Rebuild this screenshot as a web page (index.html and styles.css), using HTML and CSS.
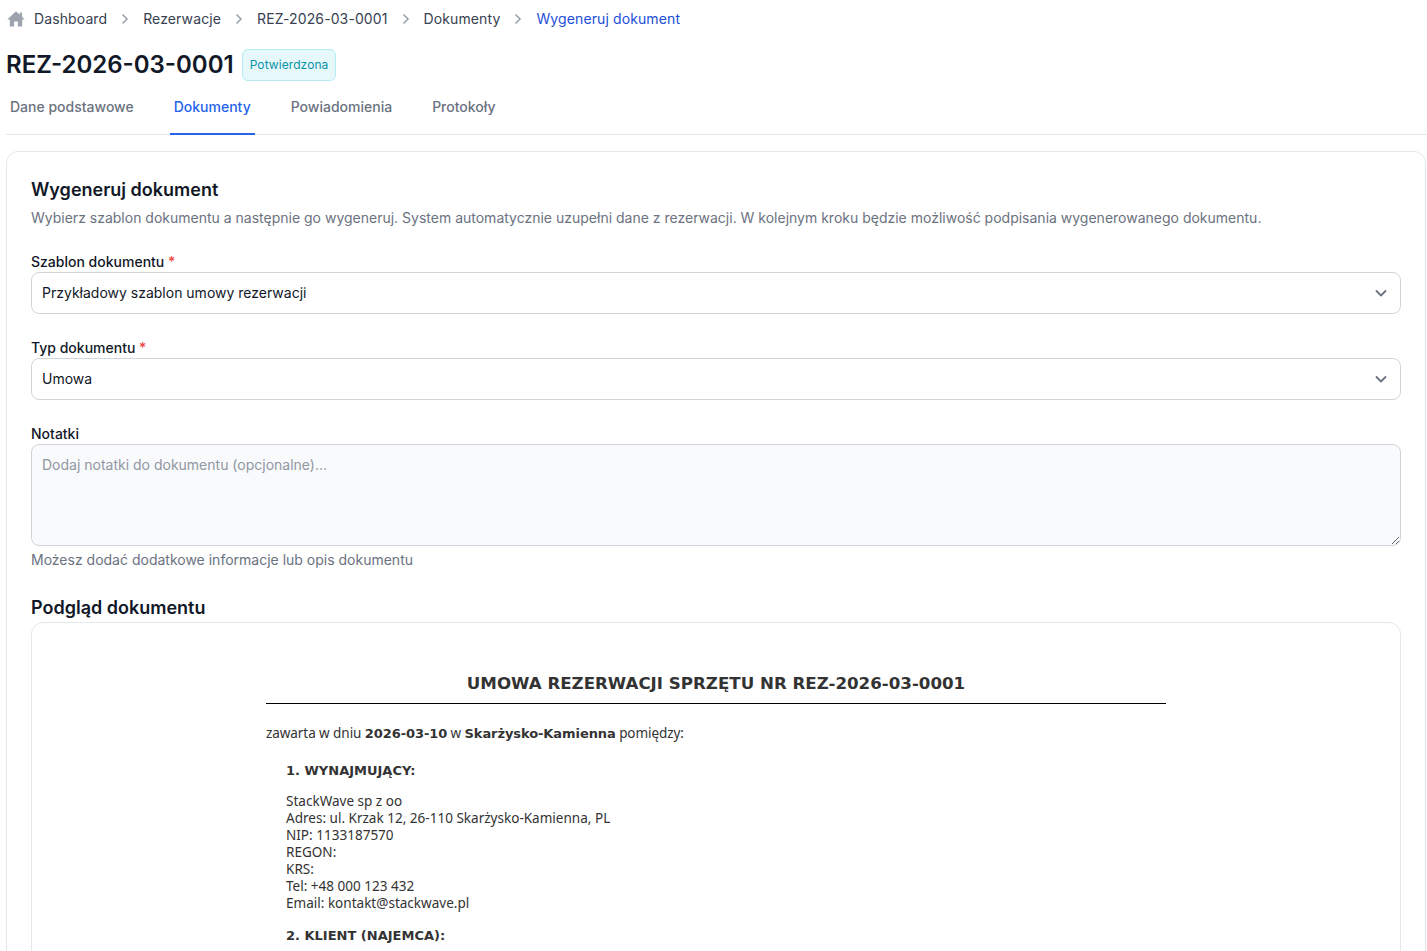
FILE: index.html
```html
<!DOCTYPE html>
<html lang="pl">
<head>
<meta charset="utf-8">
<title>Wygeneruj dokument</title>
<link rel="stylesheet" href="styles.css">
</head>
<body>
<div class="page">
  <nav class="crumbs">
    <svg class="home" viewBox="0 0 20 20" width="20" height="20"><path d="M10 2.200 1.300 10.400h2.500V17.600h4.300v-5h3.800v5h4.300V10.400h2.500L16 7.800V3.600h-2.200v2.100z"/></svg>
    <a class="crumb">Dashboard</a>
    <svg class="sep" viewBox="0 0 8 12" width="8" height="12"><path d="M1.500 1.500 6 6l-4.500 4.500"/></svg>
    <a class="crumb">Rezerwacje</a>
    <svg class="sep" viewBox="0 0 8 12" width="8" height="12"><path d="M1.500 1.500 6 6l-4.500 4.500"/></svg>
    <a class="crumb">REZ-2026-03-0001</a>
    <svg class="sep" viewBox="0 0 8 12" width="8" height="12"><path d="M1.500 1.500 6 6l-4.500 4.500"/></svg>
    <a class="crumb">Dokumenty</a>
    <svg class="sep" viewBox="0 0 8 12" width="8" height="12"><path d="M1.500 1.500 6 6l-4.500 4.500"/></svg>
    <a class="crumb current">Wygeneruj dokument</a>
  </nav>
  <header class="title-row">
    <h1>REZ-2026-03-0001</h1>
    <span class="badge">Potwierdzona</span>
  </header>
  <div class="tabs">
    <a class="tab">Dane podstawowe</a>
    <a class="tab active">Dokumenty</a>
    <a class="tab">Powiadomienia</a>
    <a class="tab">Protokoły</a>
  </div>
  <section class="card">
    <h2>Wygeneruj dokument</h2>
    <p class="lead">Wybierz szablon dokumentu a następnie go wygeneruj. System automatycznie uzupełni dane z rezerwacji. W kolejnym kroku będzie możliwość podpisania wygenerowanego dokumentu.</p>
    <div class="field">
      <label>Szablon dokumentu <span class="req">*</span></label>
      <div class="select"><span class="value">Przykładowy szablon umowy rezerwacji</span><svg viewBox="0 0 16 16" width="16" height="16"><path d="m3.500 6 4.500 4.500L12.500 6"/></svg></div>
    </div>
    <div class="field">
      <label>Typ dokumentu <span class="req">*</span></label>
      <div class="select"><span class="value">Umowa</span><svg viewBox="0 0 16 16" width="16" height="16"><path d="m3.500 6 4.500 4.500L12.500 6"/></svg></div>
    </div>
    <div class="field notes">
      <label>Notatki</label>
      <textarea placeholder="Dodaj notatki do dokumentu (opcjonalne)..."></textarea>
      <p class="hint">Możesz dodać dodatkowe informacje lub opis dokumentu</p>
    </div>
    <h3>Podgląd dokumentu</h3>
    <div class="preview">
      <article class="doc">
        <h4>UMOWA REZERWACJI SPRZĘTU NR REZ-2026-03-0001</h4>
        <p class="intro">zawarta w dniu <b>2026-03-10</b> w <b>Skarżysko-Kamienna</b> pomiędzy:</p>
        <div class="party">
          <h5>1. WYNAJMUJĄCY:</h5>
          <p>StackWave sp z oo<br>Adres: ul. Krzak 12, 26-110 Skarżysko-Kamienna, PL<br>NIP: 1133187570<br>REGON:<br>KRS:<br>Tel: +48 000 123 432<br>Email: kontakt@stackwave.pl</p>
          <h5>2. KLIENT (NAJEMCA):</h5>
        </div>
      </article>
    </div>
  </section>
</div>
</body>
</html>
```
FILE: styles.css
```css
* { box-sizing: border-box; }
html, body { margin: 0; height: 951px; overflow: hidden; background: #fff; }
body { font-family: Inter, "Liberation Sans", sans-serif; color: #111827; }
.page { padding: 0 0 0 6px; }

.crumbs { display: flex; align-items: center; height: 39px; padding-bottom: 1px; font-size: 14px; letter-spacing: .11px; color: #374151; }
.home { fill: #9ca3af; margin-right: 8px; }
.crumb { line-height: 20px; }
.crumb.current { color: #1d4ed8; }
.sep { fill: none; stroke: #9ca3af; stroke-width: 1.6; margin: 0 14px; }

.title-row { display: flex; align-items: center; gap: 8px; height: 52px; }
h1 { margin: 0; font-size: 24px; line-height: 32px; font-weight: 600; color: #111827; }
.badge { font-size: 12px; line-height: 16px; letter-spacing: .08px; color: #0b93a8; background: #e7f8fb; border: 1px solid #b4ecf3; border-radius: 6px; padding: 7px; height: 32px; }

.tabs { display: flex; gap: 32px; height: 47px; border-bottom: 1px solid #e5e7eb; margin-bottom: 16px; margin-top: -3px; }
.tab { font-size: 14px; line-height: 20px; font-weight: 500; color: #6b7280; padding: 9px 4px 0; height: 47px; }
.tab.active { color: #2563eb; border-bottom: 2px solid #2563eb; }

.card { border: 1px solid #e5e7eb; border-radius: 12px; padding: 24px 24px 0; margin-right: 1px; height: 900px; }
h2 { margin: 0; font-size: 18px; line-height: 28px; font-weight: 600; color: #111827; }
.lead { margin: 4px 0 0; font-size: 14px; line-height: 20px; color: #6b7280; }

.field { margin-top: 24px; }
label { display: block; font-size: 14px; line-height: 20px; font-weight: 500; color: #111827; height: 20px; }
.req { color: #ef4444; }
.select { display: flex; align-items: center; justify-content: space-between; height: 42px; border: 1px solid #d1d5db; border-radius: 8px; padding: 0 11px 0 10px; font-size: 14px; color: #111827; background: #fff; }
.value { margin-bottom: 2px; }
.select svg { fill: none; stroke: #6b7280; stroke-width: 1.8; stroke-linecap: round; stroke-linejoin: round; }
textarea { display: block; width: 100%; height: 102px; border: 1px solid #d1d5db; border-radius: 8px; background: #f9fafb; padding: 10px; margin: 0; font: 14px/20px Inter, sans-serif; color: #111827; resize: vertical; }
textarea::placeholder { color: #9097a3; opacity: 1; }
.hint { margin: 4px 0 0; font-size: 14px; line-height: 20px; color: #6b7280; }

h3 { margin: 24px 0 0; font-size: 18px; line-height: 28px; font-weight: 600; color: #111827; height: 28px; }
.preview { border: 1px solid #e5e7eb; border-radius: 12px; height: 600px; padding-top: 43px; }
.doc { width: 900px; margin: 0 auto; font-family: "Noto Sans", sans-serif; font-size: 13.54px; line-height: 17px; color: #333; }
.doc b, .doc h4, .doc h5 { font-family: "DejaVu Sans", sans-serif; font-weight: 700; font-size: 13px; }
.doc h4 { margin: 0; text-align: center; font-size: 16.67px; line-height: 24px; padding-top: 6px; padding-bottom: 7px; border-bottom: 1px solid #000; }
.intro { margin: 21px 0 0; letter-spacing: -.08px; }
.party { padding-left: 20px; }
.party h5 { margin: 20px 0 0; line-height: 17px; }
.party p { margin: 14px 0 0; }
.party p + h5 { margin-top: 15px; }
```
